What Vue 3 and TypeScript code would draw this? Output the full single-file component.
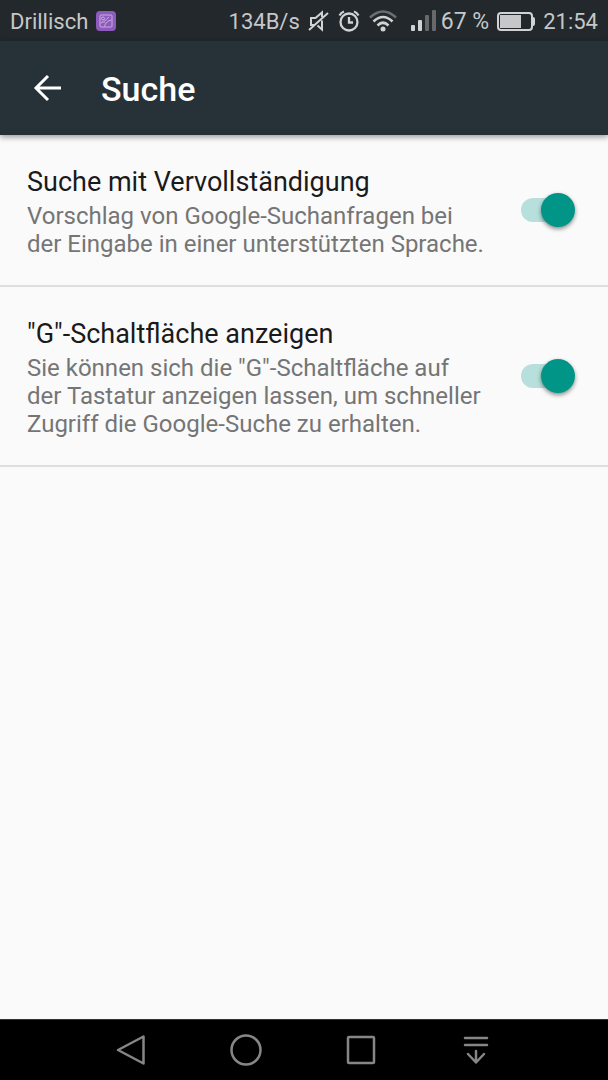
<script setup lang="ts">
import { ref } from 'vue'

interface Setting {
  id: string
  title: string
  summary: string[]
  enabled: boolean
}

const settings = ref<Setting[]>([
  {
    id: 'autocomplete',
    title: 'Suche mit Vervollständigung',
    summary: ['Vorschlag von Google-Suchanfragen bei', 'der Eingabe in einer unterstützten Sprache.'],
    enabled: true,
  },
  {
    id: 'g-button',
    title: '"G"-Schaltfläche anzeigen',
    summary: [
      'Sie können sich die "G"-Schaltfläche auf',
      'der Tastatur anzeigen lassen, um schneller',
      'Zugriff die Google-Suche zu erhalten.',
    ],
    enabled: true,
  },
])
</script>

<template>
  <div class="screen">
    <div class="status">
      <span class="carrier">Drillisch</span>
      <svg class="notice" width="20" height="20" viewBox="0 0 20 20" fill="none">
        <rect width="20" height="20" rx="4" fill="#8e5bbd" />
        <rect x="4" y="4" width="12" height="12" rx="1" stroke="#c9aee0" />
        <circle cx="7" cy="7.5" r="1.5" stroke="#c9aee0" />
        <path d="M4.5 12.5L7 10.5L8.5 12M8.5 15.5C9 12 12 9.5 15.5 9M7.5 11L13 6" stroke="#c9aee0" />
      </svg>
      <span class="speed">134B/s</span>
      <svg class="mute" width="21" height="22" viewBox="0 0 21 22" fill="none" stroke="#d0d2d3" stroke-width="2">
        <path d="M6 15H3V8H7.500L14 2.500V7M14 10.500V19.500L9.500 15.500M1 20L20 3" />
      </svg>
      <svg class="alarm" width="22" height="22" viewBox="0 0 22 22" fill="none" stroke="#d0d2d3" stroke-width="2.300">
        <circle cx="11" cy="12" r="8.500" />
        <path d="M11 7V12.500H15M1.500 5.500Q3 2.500 6 1.500M20.500 5.500Q19 2.500 16 1.500" />
      </svg>
      <svg class="wifi" width="28" height="22" viewBox="0 0 28 22" fill="none" stroke-width="2.600">
        <path d="M1 7.500Q14 -4.500 27 7.500" stroke="#6a6e70" />
        <path d="M4.500 11.500Q14 2.500 23.500 11.500M8.500 15.500Q14 10 19.500 15.500" stroke="#d0d2d3" />
        <circle cx="14" cy="19" r="2.500" fill="#d0d2d3" />
      </svg>
      <svg class="signal" width="25" height="22" viewBox="0 0 25 22">
        <rect x="0" y="15" width="4" height="6" rx="1" fill="#d0d2d3" />
        <rect x="7" y="10" width="4" height="11" rx="1" fill="#d0d2d3" />
        <rect x="14" y="5" width="4" height="16" rx="1" fill="#66696b" />
        <rect x="21" y="0" width="4" height="21" rx="1" fill="#66696b" />
      </svg>
      <span class="percent">67 %</span>
      <svg class="battery" width="38" height="20" viewBox="0 0 38 20">
        <rect x="1" y="2" width="34" height="17" rx="3" fill="none" stroke="#d0d2d3" stroke-width="2" />
        <rect x="3" y="4" width="21" height="13" fill="#c5c7c8" />
        <path d="M35 6H36Q38 6 38 8V13Q38 15 36 15H35Z" fill="#d0d2d3" />
      </svg>
      <span class="clock">21:54</span>
    </div>

    <header class="bar">
      <button class="back" type="button" aria-label="Zurück">
        <svg width="28" height="28" viewBox="0 0 28 28" fill="none" stroke="#fff" stroke-width="3">
          <path d="M28 14H3M15 2L3 14L15 26" />
        </svg>
      </button>
      <h1>Suche</h1>
    </header>

    <main class="list">
      <div v-for="item in settings" :key="item.id" class="row">
        <label class="text" :for="item.id">
          <span class="title">{{ item.title }}</span>
          <span class="summary">
            <span v-for="line in item.summary" :key="line" class="line">{{ line }} </span>
          </span>
        </label>
        <input :id="item.id" v-model="item.enabled" class="switch" type="checkbox" role="switch" />
      </div>
    </main>

    <nav class="nav">
      <button type="button" aria-label="Zurück">
        <svg width="32" height="32" viewBox="0 0 32 32">
          <path d="M28.500 2.500V29.500L3 16Z" />
        </svg>
      </button>
      <button type="button" aria-label="Startseite">
        <svg width="32" height="32" viewBox="0 0 32 32">
          <circle cx="16" cy="16" r="14.500" />
        </svg>
      </button>
      <button type="button" aria-label="Übersicht">
        <svg width="32" height="32" viewBox="0 0 32 32">
          <rect x="3" y="3" width="26" height="26" rx="1" />
        </svg>
      </button>
      <button type="button" aria-label="Benachrichtigungen">
        <svg width="32" height="32" viewBox="0 0 32 32">
          <path d="M5 4H27M5 11H27M16 17V28M8 20L16 28.500L24 20" />
        </svg>
      </button>
    </nav>
  </div>
</template>

<style>
body {
  margin: 0;
  background: #fafafa;
}
</style>

<style scoped>
.screen {
  display: flex;
  flex-direction: column;
  min-height: 100vh;
  background: #fafafa;
  color: #1a1a1a;
  font-family: Roboto, "Liberation Sans", sans-serif;
}

.screen * {
  box-sizing: border-box;
}

button {
  display: flex;
  align-items: center;
  justify-content: center;
  padding: 0;
  border: 0;
  background: none;
}

.status {
  display: flex;
  align-items: center;
  height: 41px;
  padding: 0 10px;
  background: #22282c;
  color: #c5c7c8;
  font-size: 22px;
  line-height: 28px;
  white-space: nowrap;
}

.status span {
  padding-top: 2px;
}

.status svg {
  flex: none;
}

.notice {
  margin-left: 8px;
}

.speed {
  margin-left: auto;
}

.mute {
  margin-left: 8px;
}

.alarm,
.wifi {
  margin-left: 9px;
}

.signal {
  margin-left: 14px;
}

.percent {
  margin-left: 5px;
  font-size: 23px;
}

.battery,
.clock {
  margin-left: 8px;
}

.bar {
  position: relative;
  display: flex;
  align-items: center;
  height: 94px;
  padding: 0 23px;
  background: #273238;
  box-shadow: 0 2px 6px rgba(0, 0, 0, 0.4);
}

.back {
  width: 48px;
  height: 48px;
}

h1 {
  margin: 0 0 0 30px;
  padding-top: 2px;
  color: #fff;
  font-size: 34px;
  font-weight: 500;
  line-height: 40px;
}

.list {
  flex: 1;
}

.row {
  display: flex;
  align-items: center;
  justify-content: space-between;
  padding: 0 33px 0 27px;
  border-bottom: 2px solid #dedede;
}

.text {
  padding: 31px 0 27px;
}

.text,
.title,
.summary,
.line {
  display: block;
}

.title {
  font-size: 27px;
  line-height: 32px;
}

.summary {
  margin-top: 4px;
  color: #757575;
  font-size: 24px;
  line-height: 28px;
}

.switch {
  position: relative;
  display: flex;
  flex: none;
  align-items: center;
  width: 54px;
  height: 34px;
  margin: 0;
  appearance: none;
  border-radius: 17px;
}

.switch::before {
  content: "";
  width: 50px;
  height: 24px;
  border-radius: 12px;
  background: #c4c4c4;
}

.switch::after {
  content: "";
  position: absolute;
  left: 0;
  top: 0;
  width: 34px;
  height: 34px;
  border-radius: 50%;
  background: #f1f1f1;
  box-shadow: 0 2px 4px rgba(0, 0, 0, 0.45);
}

.switch:checked::before {
  background: #b7dfdb;
}

.switch:checked::after {
  left: auto;
  right: 0;
  background: #009587;
}

.nav {
  display: flex;
  justify-content: center;
  height: 61px;
  padding: 0 75px 0 73px;
  border-top: 1px solid #333;
  background: #000;
}

.nav button {
  flex: 1;
}

.nav svg {
  fill: none;
  stroke: #868686;
  stroke-width: 2.5;
  stroke-linecap: round;
  stroke-linejoin: round;
}
</style>
